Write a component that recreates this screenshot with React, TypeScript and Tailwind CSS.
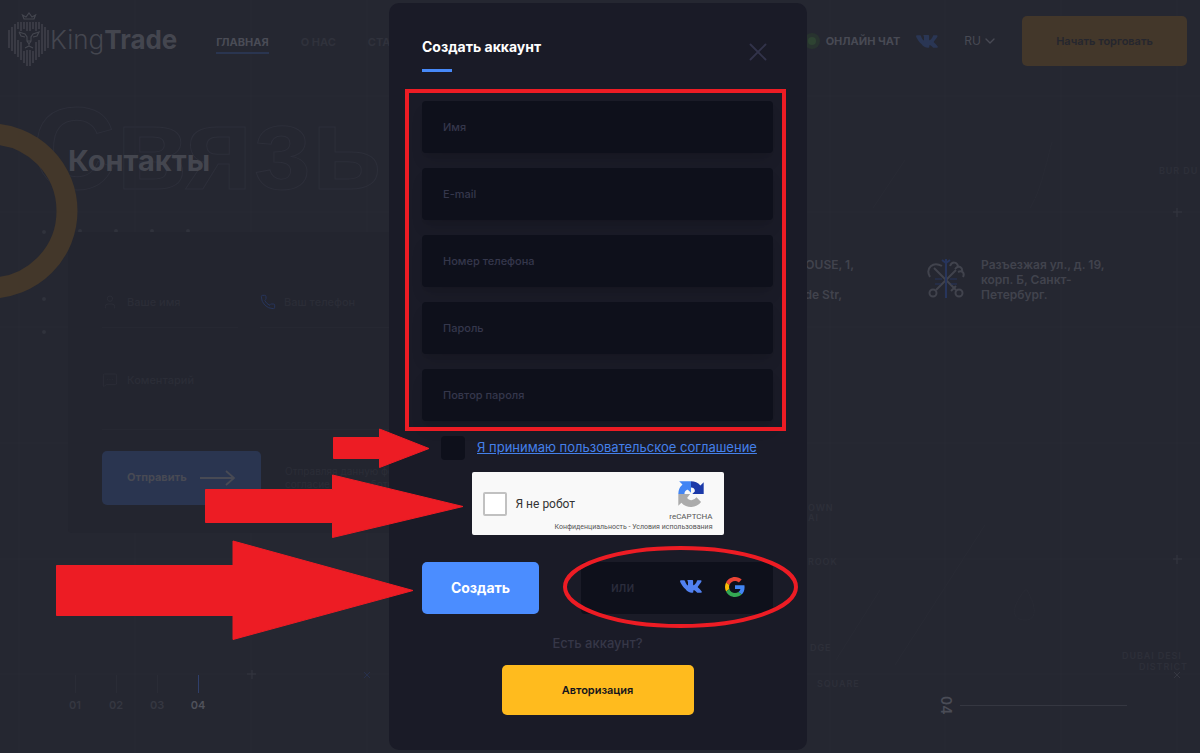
// src/App.tsx
import React, { useState } from 'react';
import { ChevronDown, MessageSquareMore, Phone, User, X } from 'lucide-react';

interface Field {
    id: string;
    label: string;
    type: string;
}

const FIELDS: Field[] = [
    { id: 'name', label: 'Имя', type: 'text' },
    { id: 'email', label: 'E-mail', type: 'email' },
    { id: 'phone', label: 'Номер телефона', type: 'tel' },
    { id: 'password', label: 'Пароль', type: 'password' },
    { id: 'repeat', label: 'Повтор пароля', type: 'password' },
];

const VkIcon = ({ className }: { className?: string }) => (
    <svg viewBox="0 0 22 13" className={className} fill="currentColor" aria-hidden="true">
        <path d="M0 .9C0 .4.4.2 1 .2h3c.6 0 .8.3 1 .9.8 2.3 2 4.3 2.600 4.300.3 0 .4-.2.4-.9V2.300C8 1.200 7.300 1.100 7.300.6c0-.3.3-.6.7-.6h4.300c.6 0 .8.3.8.9v3.500c0 .6.3.8.5.8.4 0 .7-.2 1.300-.9 1-1.100 2-3.100 2-3.100.1-.4.4-.9 1.100-.9h2.700c.8 0 1 .4.8 1-.4 1.500-3.500 5.100-3.500 5.100-.3.5-.4.7 0 1.200.9.9 3 2.700 3.700 4 .4.7 0 1.200-.7 1.200h-3.100c-.8 0-1.100-.4-2-1.300-.6-.6-1.400-1.300-1.900-1.300-.6 0-.7.2-.7.9v1c0 .5-.2.700-1.500.7-2.200 0-4.700-1.300-6.400-3.800C2.200 6 .0 1.800 0 .9z" />
    </svg>
);

const GoogleIcon = () => (
    <svg viewBox="0 0 48 48" className="h-5 w-5" aria-hidden="true">
        <path fill="#EA4335" d="M24 9.500c3.540 0 6.710 1.220 9.210 3.600l6.850-6.850C35.900 2.380 30.470 0 24 0 14.620 0 6.510 5.380 2.560 13.220l7.980 6.190C12.430 13.720 17.740 9.500 24 9.500z" />
        <path fill="#4285F4" d="M46.980 24.550c0-1.570-.15-3.090-.38-4.550H24v9.020h12.940c-.58 2.960-2.260 5.480-4.780 7.180l7.730 6c4.510-4.180 7.090-10.360 7.090-17.650z" />
        <path fill="#FBBC05" d="M10.530 28.590c-.48-1.450-.76-2.990-.76-4.590s.27-3.140.76-4.590l-7.980-6.190C.92 16.460 0 20.120 0 24c0 3.880.92 7.540 2.560 10.780l7.970-6.190z" />
        <path fill="#34A853" d="M24 48c6.480 0 11.930-2.130 15.890-5.810l-7.730-6c-2.150 1.450-4.920 2.300-8.160 2.300-6.260 0-11.570-4.220-13.470-9.910l-7.980 6.190C6.510 42.620 14.620 48 24 48z" />
    </svg>
);

const RecaptchaIcon = () => (
    <svg viewBox="0 0 64 64" className="h-7 w-7" aria-hidden="true">
        <path fill="#1c3aa9" d="M61 32V5l-7.500 7.500A29 29 0 0 0 32 3v14c2-.2 4 .3 5.500 1.500a10 10 0 0 1 3.500 7L35 32z" />
        <path fill="#4285f4" d="M32 3H5l7.500 7.500A29 29 0 0 0 3 32h14c0-4 2-7.500 5-9 1-.5 2.500-.7 3.500-.3L32 29z" />
        <path fill="#ababab" d="M3 32v27l7-7a29 29 0 0 0 45-2l-10.500-10.500A14 14 0 0 1 32 46a14 14 0 0 1-9-5l7-9z" />
    </svg>
);

// x, top, bottom for every hair of the mane
const MANE = [
    [9, 30, 48], [12, 27, 51], [15, 24, 54], [18, 22, 29], [21, 22, 31], [24, 22, 29], [27, 22, 31],
    [30, 22, 31], [33, 22, 29], [36, 22, 31], [39, 22, 29], [42, 24, 54], [45, 27, 51], [48, 30, 48],
    [18, 40, 57], [21, 42, 60], [24, 51, 63], [27, 50, 66], [30, 50, 66], [33, 51, 63], [36, 42, 60], [39, 40, 57],
];

const Logo = () => (
    <a href="#" className="flex items-center text-[#44464f]">
        <svg viewBox="8 12 42 55" className="h-[55px] w-[42px]" fill="none" stroke="currentColor" aria-hidden="true">
            <g strokeWidth="1.300">
                {MANE.map(([x, y1, y2]) => (
                    <path key={`${x}-${y1}`} d={`M${x} ${y1}V${y2}`} />
                ))}
            </g>
            <path strokeWidth="1.200" d="M24 19h10l1.500-4-3.500 2-3-4-3 4-3.500-2zM19 32l6 2 2 3v4l2 3 2-3v-4l2-3 6-2-2 4-4 1M19 32l2 4 4 1M27 41h4M29 44v2m-4 2 4-2 4 2" />
        </svg>
        <span className="text-[26px] leading-8 font-light">
            King<b className="font-bold">Trade</b>
        </span>
    </a>
);

const Header = () => (
    <header className="flex items-start justify-between pr-[13px] pl-2">
        <div className="flex pt-3">
            <Logo />
            <nav className="flex items-start gap-8 pt-5 pl-[39px] text-[11px] leading-5 font-bold">
                <a href="#" className="border-b-2 border-[#2a3550] text-[#4a4c56]">ГЛАВНАЯ</a>
                <a href="#" className="text-[#30323c]">О НАС</a>
                <a href="#" className="text-[#30323c]">СТАРТ</a>
            </nav>
        </div>
        <div className="flex items-center pt-4 text-[#484a54]">
            <span className="mr-[6px] flex h-4 w-4 items-center justify-center rounded-full bg-[#28332f]">
                <span className="h-2 w-2 rounded-full bg-[#2e4332]" />
            </span>
            <a href="#" className="mr-4 text-[11px] font-bold">ОНЛАЙН ЧАТ</a>
            <a href="#" aria-label="VK" className="mr-[26px] text-[#2a3654]">
                <VkIcon className="h-[13px] w-[22px]" />
            </a>
            <button type="button" className="mr-6 flex items-center gap-px text-xs">
                RU <ChevronDown className="h-4 w-4" />
            </button>
            <button type="button" className="h-[50px] w-[165px] rounded-[5px] bg-[#43372a] text-[11px] font-semibold text-[#25262e]">
                Начать торговать
            </button>
        </div>
    </header>
);

const ContactForm = () => (
    <form className="h-[301px] w-[560px] rounded bg-[#23252f] px-[34px] pt-[62px] text-[#2b2d37]" onSubmit={(e) => e.preventDefault()}>
        <div className="flex gap-[22px] text-[11px] font-medium">
            <label className="flex w-[136px] items-center gap-[9px] border-b border-[#262832] pb-4">
                <User className="h-4 w-4" strokeWidth={1.5} />
                <input aria-label="Ваше имя" className="w-20 placeholder:text-[#2b2d37]" placeholder="Ваше имя" />
            </label>
            <label className="flex items-center gap-2 border-b border-[#262832] pb-4">
                <Phone className="h-4 w-4 text-[#27355c]" strokeWidth={1.5} />
                <input aria-label="Ваш телефон" className="w-28 placeholder:text-[#2b2d37]" placeholder="Ваш телефон" />
            </label>
        </div>
        <label className="mt-11 flex h-[58px] items-start gap-[9px] border-b border-[#262832] text-[11px] font-medium">
            <MessageSquareMore className="h-4 w-4" strokeWidth={1.5} />
            <textarea aria-label="Коментарий" className="h-8 grow resize-none placeholder:text-[#2b2d37]" placeholder="Коментарий" />
        </label>
        <div className="mt-[21px] flex items-center gap-6">
            <button type="submit" className="flex h-[54px] w-[159px] shrink-0 items-center gap-[13px] rounded-[5px] bg-[#2a3550] pl-[25px] text-[11px] font-bold text-[#484a54]">
                Отправить
                <svg viewBox="0 0 36 16" className="h-4 w-9" fill="none" stroke="currentColor" strokeWidth="1.800" aria-hidden="true">
                    <path d="M0 8h34M26 1l8 7-8 7" />
                </svg>
            </button>
            <p className="text-[10px] leading-[13px] whitespace-nowrap">
                Отправляя данную форму, вы даете<br />согласие на обработку
            </p>
        </div>
    </form>
);

const Addresses = () => (
    <div className="flex pt-[25px] text-xs leading-[15px] font-semibold text-[#41434d]">
        <address className="mr-[73px] w-[90px] text-right not-italic">
            HOUSE, 1,
            <span className="block pt-[15px] pr-3">Hyde Str,</span>
        </address>
        <svg viewBox="0 0 38 42" className="mr-4 h-[42px] w-[38px]" fill="none" stroke="currentColor" strokeWidth="2" aria-hidden="true">
            <circle cx="6" cy="36" r="3.500" />
            <circle cx="32" cy="36" r="3.500" />
            <path d="M9 33 29 13M29 33 7 11M24 34l5-5M3 20C-2 11 6 4 15 9M23 9c2-5 7-4 8 0m-3 3c4-5 8-1 7 3m-4 0c4-2 7 1 5 5" />
            <path stroke="#27355c" d="M19 2v39M15 3l4 3 4-3" />
            <path stroke="#27355c" strokeWidth="1" d="M8 22h7m8 0h7M8 27h6m10 0h6" />
        </svg>
        <address className="w-[135px] not-italic">
            Разъезжая ул., д. 19, корп. Б, Санкт-Петербург.
        </address>
    </div>
);

const GRID_X = [19, 135, 251, 367, 830, 945, 1061, 1177];
const GRID_Y = [96, 212, 327, 443, 559, 674];
const DOTS = [[44, 232], [80, 231], [116, 231], [152, 231], [188, 231], [44, 299], [44, 332]];

const MapBackdrop = () => (
    <svg width="1200" height="753" className="absolute top-0 left-0" fill="none" aria-hidden="true">
        <g stroke="#282a34">
            {GRID_X.map((x) => <path key={x} d={`M${x} 0V753`} />)}
            {GRID_Y.map((y) => <path key={y} d={`M0 ${y}H1200`} />)}
            <path d="M1052 142c-8 30-12 50-22 66M905 160l-32 48M895 665l90-140M880 590l-44 70M1025 590c-16 20-12 30 0 30s12-12 2-30z" />
        </g>
        <path stroke="#353741" d="M247 674h9m-4-4v9M1173 212h9m-5-4v9M1173 559h9m-5-4v9M1174 672l6 6m0-6-6 6" />
        <path stroke="#27304c" d="M364 672l6 6m0-6-6 6" />
        <g fill="#30323c">
            {DOTS.map(([x, y]) => <circle key={`${x}-${y}`} cx={x} cy={y} r="2" />)}
        </g>
        <g fill="#2d2f39" className="text-[9px] font-semibold tracking-widest">
            <text x="1159" y="174">BUR DU</text>
            <text x="808" y="511">OWN</text>
            <text x="808" y="521">AI</text>
            <text x="808" y="565">ROOK</text>
            <text x="810" y="651">DGE</text>
            <text x="817" y="687">SQUARE</text>
            <text x="1122" y="659">DUBAI DESI</text>
            <text x="1139" y="670">DISTRICT</text>
        </g>
    </svg>
);

const Ring = () => (
    <svg width="80" height="180" viewBox="0 121 80 180" className="absolute top-[121px] left-0" fill="none" aria-hidden="true">
        <circle cx="-10" cy="211" r="77" stroke="#43372a" strokeWidth="21" />
    </svg>
);

const Pager = () => (
    <footer className="flex items-end justify-between pr-[73px] pl-[68px] text-[11px] font-semibold text-[#353741]">
        <ol className="flex gap-[27px]">
            {['01', '02', '03', '04'].map((n) => (
                <li key={n} className={`flex w-[14px] flex-col items-center gap-1 ${n === '04' ? 'text-[#50525b]' : ''}`}>
                    <span className={`h-[18px] border-l ${n === '04' ? 'border-[#2f3f6b]' : 'border-[#2a2c36]'}`} />
                    {n}
                </li>
            ))}
        </ol>
        <div className="flex h-4 items-center gap-1 text-sm text-[#4a4c56]">
            <span className="[writing-mode:vertical-rl]">04</span>
            <span className="w-[167px] border-t border-[#353741]" />
        </div>
    </footer>
);

const SignUpDialog = () => {
    const [accepted, setAccepted] = useState(false);
    const [human, setHuman] = useState(false);

    return (
        <form
            role="dialog"
            aria-labelledby="dialog-title"
            className="w-[418px] rounded-[10px] bg-[#1a1b27] pr-[34px] pb-[35px] pl-[33px]"
            onSubmit={(e) => e.preventDefault()}
        >
            <div className="flex items-start justify-between pt-[34px]">
                <h2 id="dialog-title" className="text-sm font-bold text-white">Создать аккаунт</h2>
                <button type="button" aria-label="Закрыть" className="text-[#32334a]">
                    <X className="h-[30px] w-[30px]" strokeWidth={1.5} />
                </button>
            </div>
            <div className="mt-[2px] h-[3px] w-[30px] bg-[#4789f8]" />

            <div className="mt-[29px] flex flex-col gap-[15px]">
                {FIELDS.map((field) => (
                    <input
                        key={field.id}
                        type={field.type}
                        aria-label={field.label}
                        placeholder={field.label}
                        className="h-[52px] w-full rounded bg-[#0e101b] px-[21px] text-[11px] font-medium text-white shadow-lg shadow-black/10 placeholder:text-[#35374c]"
                    />
                ))}
            </div>

            <div className="mt-[15px] flex items-center gap-3 pl-[19px]">
                <input
                    id="terms"
                    type="checkbox"
                    checked={accepted}
                    onChange={(e) => setAccepted(e.target.checked)}
                    className="h-6 w-6 appearance-none rounded bg-[#0e101b] checked:bg-[#4b8dff]"
                />
                <label htmlFor="terms" className="text-[13px] whitespace-nowrap">
                    <a href="#" className="text-[#4480ea] underline">Я принимаю пользовательское соглашение</a>
                </label>
            </div>

            <div className="mx-auto mt-3 flex h-[63px] w-[252px] justify-between rounded-xs bg-[#f9f9f9] px-[11px] font-[Roboto,sans-serif] text-[#333]">
                <div className="flex items-center gap-[9px]">
                    <input
                        id="human"
                        type="checkbox"
                        checked={human}
                        onChange={(e) => setHuman(e.target.checked)}
                        className="h-6 w-6 appearance-none rounded-xs border-2 border-[#c1c1c1] bg-white checked:bg-[#4b8dff]"
                    />
                    <label htmlFor="human" className="text-xs whitespace-nowrap">Я не робот</label>
                </div>
                <div className="flex flex-col items-end pt-2 text-[#555]">
                    <div className="flex flex-col items-center">
                        <RecaptchaIcon />
                        <span className="mt-1 text-[8px] leading-[9px]">reCAPTCHA</span>
                    </div>
                    <p className="mt-[2px] -ml-[60px] text-[7px] leading-[8px] whitespace-nowrap">
                        <a href="#">Конфиденциальность</a> - <a href="#">Условия использования</a>
                    </p>
                </div>
            </div>

            <div className="mt-[27px] flex justify-between">
                <button type="submit" className="h-[52px] w-[117px] rounded-[5px] bg-[#4b8dff] text-sm font-bold text-white">
                    Создать
                </button>
                <div className="flex h-[52px] w-[192px] items-center rounded bg-[#0e101b] pb-[3px] pl-[30px] text-[#2a2c3c]">
                    <span className="w-[69px] pt-[2px] text-[13px] font-medium">или</span>
                    <a href="#" aria-label="VK" className="text-[#5181f0]">
                        <VkIcon className="h-[13px] w-[22px]" />
                    </a>
                    <a href="#" aria-label="Google" className="ml-[23px]">
                        <GoogleIcon />
                    </a>
                </div>
            </div>

            <p className="mt-5 text-center text-[13px] leading-[18px] font-medium text-[#363748]">Есть аккаунт?</p>
            <button type="button" className="mx-auto mt-[13px] block h-[50px] w-[192px] rounded-[5px] bg-[#ffbb1e] text-[11px] font-semibold text-[#15151d]">
                Авторизация
            </button>
        </form>
    );
};

// red marker shapes pointing at the steps of the form
const Markers = () => (
    <svg width="1200" height="753" className="pointer-events-none absolute top-0 left-0" aria-hidden="true">
        <g fill="none" stroke="#ed1c24" strokeWidth="4">
            <rect x="407" y="91" width="377" height="338" />
            <ellipse cx="680.5" cy="587" rx="115.500" ry="39" />
        </g>
        <g fill="#ed1c24" stroke="#ed1c24" strokeLinejoin="round">
            <path d="M333.500 437.500H379.500V429L429 448.500 379.500 467.500V458.500H333.500z" />
            <path d="M205.500 489.500H332.500V475L463 506.500 332.500 537.500V522.500H205.500z" />
            <path d="M56.500 565.500H233V541L413 590.500 233 639.500V615.500H56.500z" />
        </g>
    </svg>
);

const App: React.FC = () => (
    <div className="relative flex min-h-screen flex-col overflow-hidden bg-[#252731] font-[Inter,sans-serif]">
        <MapBackdrop />
        <div className="relative flex grow flex-col">
            <Header />
            <main className="grow pl-[68px]">
                <div className="relative pt-[76px]">
                    <span aria-hidden="true" className="absolute top-6 -left-9 font-['Liberation_Sans',sans-serif] text-[116px] leading-none font-bold text-transparent [-webkit-text-stroke:1px_#2d2f3a]">
                        Связь
                    </span>
                    <h1 className="relative text-[29px] leading-9 font-bold text-[#44464f]">Контакты</h1>
                </div>
                <div className="mt-[53px] flex items-start justify-between">
                    <ContactForm />
                    <div className="pr-[84px]">
                        <Addresses />
                    </div>
                </div>
            </main>
            <div className="pb-10">
                <Pager />
            </div>
            <Ring />
        </div>
        <div className="absolute inset-0 flex items-start justify-center pt-[3px] pr-1">
            <SignUpDialog />
        </div>
        <Markers />
    </div>
);

export default App;
